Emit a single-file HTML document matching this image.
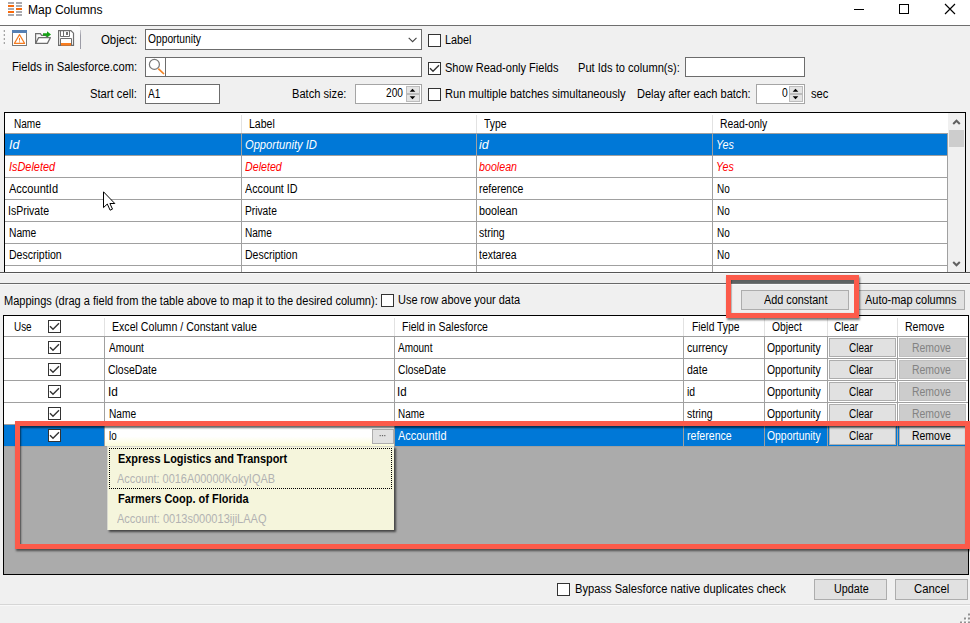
<!DOCTYPE html>
<html>
<head>
<meta charset="utf-8">
<title>Map Columns</title>
<style>
*{box-sizing:border-box;margin:0;padding:0}
html,body{width:970px;height:623px;overflow:hidden;background:#f0f0f0}
body{position:relative;font-family:"Liberation Sans",sans-serif;font-size:12px;color:#000;line-height:14px}
.a{position:absolute;white-space:nowrap}
.t{position:absolute;white-space:nowrap;height:14px;line-height:14px;transform-origin:0 0}
.inp{position:absolute;background:#fff;border:1px solid #6c6c6c}
.cb{position:absolute;width:13px;height:13px;background:#fff;border:1px solid #333}
.cb svg{position:absolute;left:0;top:0}
.btn{position:absolute;background:#e1e1e1;border:1px solid #adadad}
.btn.dis{background:#cccccc;border-color:#bfbfbf}
.hl{position:absolute;background:#a0a0a0;height:1px}
.vl{position:absolute;background:#a0a0a0;width:1px}
</style>
</head>
<body>
<!-- title bar -->
<div class="a" style="left:0;top:0;width:970px;height:25px;background:#fff"></div>
<div class="a" style="left:0;top:25px;width:970px;height:1px;background:#6e6e6e"></div>
<svg class="a" style="left:8px;top:2px" width="14" height="15" viewBox="0 0 14 15">
<g fill="#a9a9ae">
<rect x="0" y="0" width="6" height="2"/><rect x="8" y="0" width="6" height="2"/>
<rect x="8" y="3" width="6" height="2"/><rect x="0" y="6" width="6" height="2"/><rect x="8" y="9" width="6" height="2"/>
<rect x="0" y="12" width="6" height="2"/><rect x="8" y="12" width="6" height="2"/>
</g>
<g fill="#fa6a0a">
<rect x="0" y="3" width="6" height="2"/><rect x="8" y="6" width="6" height="2"/><rect x="0" y="9" width="6" height="2"/>
</g>
</svg>
<svg class="a" style="left:850px;top:0" width="120" height="25" viewBox="0 0 120 25" fill="none" stroke="#000" stroke-width="1">
<path d="M4 9.5H14"/><rect x="49.5" y="4.5" width="9" height="9"/><path d="M95 4L105 14M105 4L95 14" stroke-width="1.15"/>
</svg>

<!-- toolbar -->
<div class="a" style="left:0;top:26px;width:80px;height:24px;background:linear-gradient(#fcfcfc,#f5f5f5);border-radius:0 2px 2px 0"></div>
<div class="a" style="left:80px;top:30px;width:1px;height:19px;background:linear-gradient(#d0d0d4,#9c9ca6 30%)"></div>
<svg class="a" style="left:3px;top:29px" width="3" height="16" viewBox="0 0 3 16" fill="#a6a6a6"><rect x="0.7" y="1" width="1.3" height="2"/><rect x="0.7" y="5" width="1.3" height="2"/><rect x="0.7" y="9" width="1.3" height="2"/><rect x="0.7" y="13" width="1.3" height="2"/></svg>
<svg class="a" style="left:12px;top:30px" width="16" height="16" viewBox="0 0 16 16">
<rect x="0.5" y="0.5" width="14" height="15" fill="#fff" stroke="#7a7a7a"/>
<rect x="0" y="0" width="15" height="3" fill="#5580b4"/>
<path d="M7.5 4.6L12.6 13.4H2.4Z" fill="none" stroke="#f47b20" stroke-width="1.1" stroke-linejoin="round"/>
<rect x="7" y="8" width="1" height="2.6" fill="#f47b20"/><rect x="7" y="11.4" width="1" height="1" fill="#f47b20"/>
</svg>
<svg class="a" style="left:35px;top:30px" width="17" height="16" viewBox="0 0 17 16">
<path d="M0.6 13.4V3.6H5.4L6.6 5.4H11.4V7.5" fill="none" stroke="#6e6e6e" stroke-width="1.2"/>
<path d="M0.6 13.4L3.6 7.6H15.4L12.4 13.4Z" fill="#fff" stroke="#6e6e6e" stroke-width="1.2" stroke-linejoin="round"/>
<path d="M8 3.2H12V1.2L16 4.4L12 7.6V5.8H8Z" fill="#14a014"/>
</svg>
<svg class="a" style="left:58px;top:30px" width="17" height="16" viewBox="0 0 17 16">
<path d="M0.6 0.6H12.9L15.5 3.2V15.4H0.6Z" fill="#fff" stroke="#6e6e6e" stroke-width="1.2"/>
<path d="M2.5 0.6V6.5H11.5V0.6" fill="none" stroke="#707070" stroke-width="1"/>
<path d="M5.5 0.6V6.5" fill="none" stroke="#707070" stroke-width="1"/>
<rect x="8" y="2" width="2" height="3" fill="#707070"/>
<path d="M2.5 15.4V8.5H13.5V15.4" fill="none" stroke="#707070" stroke-width="1"/>
<rect x="3" y="13" width="10" height="2.6" fill="#fa7d1e"/>
</svg>

<div class="inp" style="left:145px;top:29px;width:277px;height:21px"></div>
<svg class="a" style="left:408px;top:37px" width="10" height="7" viewBox="0 0 10 7" fill="none" stroke="#444" stroke-width="1.1"><path d="M0.7 0.8L4.6 4.7L8.5 0.8"/></svg>
<div class="cb" style="left:428px;top:34px"></div>
<div class="inp" style="left:145px;top:57px;width:277px;height:20px"></div>
<div class="a" style="left:165px;top:58px;width:1px;height:18px;background:#6c6c6c"></div>
<svg class="a" style="left:147px;top:58px" width="18" height="18" viewBox="0 0 18 18" fill="none"><circle cx="7.4" cy="6.4" r="5" stroke="#777" stroke-width="1.2"/><path d="M11.3 10.6L17 16" stroke="#f58220" stroke-width="1.7"/></svg>
<div class="cb" style="left:428px;top:62px"><svg width="11" height="11" viewBox="0 0 11 11" fill="none" stroke="#333" stroke-width="1.4"><path d="M1 5.3L4 8.3L10 2.2"/></svg></div>
<div class="inp" style="left:685px;top:57px;width:120px;height:20px"></div>
<div class="inp" style="left:145px;top:84px;width:75px;height:20px"></div>
<div class="inp" style="left:355px;top:84px;width:67px;height:20px;border-color:#a5a5a5"></div>
<div class="a" style="left:406px;top:86px;width:14px;height:8px;background:#e4e4e4;border:1px solid #bcbcbc"></div>
<div class="a" style="left:406px;top:94px;width:14px;height:8px;background:#e4e4e4;border:1px solid #bcbcbc"></div>
<svg class="a" style="left:409px;top:88px" width="7" height="12" viewBox="0 0 7 12" fill="#000"><path d="M0.7 3.8L3.5 0.8L6.3 3.8Z"/><path d="M0.7 8.2L3.5 11.2L6.3 8.2Z"/></svg>
<div class="cb" style="left:428px;top:88px"></div>
<div class="inp" style="left:756px;top:84px;width:49px;height:20px;border-color:#a5a5a5"></div>
<div class="a" style="left:789px;top:86px;width:14px;height:8px;background:#e4e4e4;border:1px solid #bcbcbc"></div>
<div class="a" style="left:789px;top:94px;width:14px;height:8px;background:#e4e4e4;border:1px solid #bcbcbc"></div>
<svg class="a" style="left:792px;top:88px" width="7" height="12" viewBox="0 0 7 12" fill="#000"><path d="M0.7 3.8L3.5 0.8L6.3 3.8Z"/><path d="M0.7 8.2L3.5 11.2L6.3 8.2Z"/></svg>

<!-- TABLE 1 -->
<div class="a" style="left:4px;top:112px;width:962px;height:160px;background:#fff;border:1px solid #000;border-bottom:none;overflow:hidden">
<div class="vl" style="left:236px;top:2px;height:18px;background:#e2e2e2"></div>
<div class="vl" style="left:471px;top:2px;height:18px;background:#e2e2e2"></div>
<div class="vl" style="left:707px;top:2px;height:18px;background:#e2e2e2"></div>
<div class="hl" style="left:0;top:20px;width:943px"></div>
<div class="a" style="left:0;top:21px;width:943px;height:21px;background:#0078d7"></div>
<div class="hl" style="left:0;top:42px;width:943px"></div>
<div class="hl" style="left:0;top:64px;width:943px"></div>
<div class="hl" style="left:0;top:86px;width:943px"></div>
<div class="hl" style="left:0;top:108px;width:943px"></div>
<div class="hl" style="left:0;top:130px;width:943px"></div>
<div class="hl" style="left:0;top:152px;width:943px"></div>
<div class="hl" style="left:0;top:174px;width:943px"></div>
<div class="vl" style="left:236px;top:20px;height:140px"></div>
<div class="vl" style="left:471px;top:20px;height:140px"></div>
<div class="vl" style="left:707px;top:20px;height:140px"></div>
<div class="vl" style="left:942px;top:20px;height:140px"></div>
<div class="a" style="left:943px;top:0;width:17px;height:160px;background:#f0f0f0"></div>
<div class="a" style="left:944px;top:17px;width:15px;height:17px;background:#cdcdcd"></div>
<svg class="a" style="left:947px;top:6px" width="9" height="6" viewBox="0 0 9 6" fill="none" stroke="#606060" stroke-width="2"><path d="M1.2 5L4.5 1.7L7.8 5"/></svg>
<svg class="a" style="left:947px;top:148px" width="9" height="6" viewBox="0 0 9 6" fill="none" stroke="#606060" stroke-width="2"><path d="M1.2 1L4.5 4.3L7.8 1"/></svg>
</div>
<!-- splitter lines -->
<div class="a" style="left:0;top:272px;width:970px;height:1px;background:#565656"></div><div class="a" style="left:0;top:273px;width:970px;height:1px;background:#f9f9f9"></div>
<div class="a" style="left:0;top:283px;width:970px;height:1px;background:#686868"></div><div class="a" style="left:0;top:284px;width:970px;height:1px;background:#f9f9f9"></div>
<!-- mappings -->
<div class="cb" style="left:381px;top:294px"></div>
<div class="btn" style="left:741px;top:290px;width:108px;height:20px"></div>
<div class="btn" style="left:858px;top:290px;width:107px;height:20px"></div>

<!-- GRID 2 -->
<div class="a" style="left:3px;top:315px;width:966px;height:260px;background:#ababab;border:1px solid #000;overflow:hidden">
<div class="a" style="left:0;top:0;width:964px;height:20px;background:#fff"></div>
<div class="vl" style="left:100px;top:2px;height:18px;background:#e2e2e2"></div>
<div class="vl" style="left:390px;top:2px;height:18px;background:#e2e2e2"></div>
<div class="vl" style="left:679px;top:2px;height:18px;background:#e2e2e2"></div>
<div class="vl" style="left:760px;top:2px;height:18px;background:#e2e2e2"></div>
<div class="vl" style="left:823px;top:2px;height:18px;background:#e2e2e2"></div>
<div class="vl" style="left:893px;top:2px;height:18px;background:#e2e2e2"></div>
<div class="hl" style="left:0;top:20px;width:964px"></div>
<div class="cb" style="left:44px;top:4px"><svg width="11" height="11" viewBox="0 0 11 11" fill="none" stroke="#333" stroke-width="1.4"><path d="M1 5.3L4 8.3L10 2.2"/></svg></div>
<div class="a" style="left:0;top:21px;width:964px;height:21px;background:#fff"></div>
<div class="cb" style="left:44px;top:25px"><svg width="11" height="11" viewBox="0 0 11 11" fill="none" stroke="#333" stroke-width="1.4"><path d="M1 5.3L4 8.3L10 2.2"/></svg></div>
<div class="btn" style="left:825px;top:22px;width:67px;height:19px"></div>
<div class="btn dis" style="left:895px;top:22px;width:67px;height:19px"></div>
<div class="hl" style="left:0;top:42px;width:964px"></div>
<div class="a" style="left:0;top:43px;width:964px;height:21px;background:#fff"></div>
<div class="cb" style="left:44px;top:47px"><svg width="11" height="11" viewBox="0 0 11 11" fill="none" stroke="#333" stroke-width="1.4"><path d="M1 5.3L4 8.3L10 2.2"/></svg></div>
<div class="btn" style="left:825px;top:44px;width:67px;height:19px"></div>
<div class="btn dis" style="left:895px;top:44px;width:67px;height:19px"></div>
<div class="hl" style="left:0;top:64px;width:964px"></div>
<div class="a" style="left:0;top:65px;width:964px;height:21px;background:#fff"></div>
<div class="cb" style="left:44px;top:69px"><svg width="11" height="11" viewBox="0 0 11 11" fill="none" stroke="#333" stroke-width="1.4"><path d="M1 5.3L4 8.3L10 2.2"/></svg></div>
<div class="btn" style="left:825px;top:66px;width:67px;height:19px"></div>
<div class="btn dis" style="left:895px;top:66px;width:67px;height:19px"></div>
<div class="hl" style="left:0;top:86px;width:964px"></div>
<div class="a" style="left:0;top:87px;width:964px;height:21px;background:#fff"></div>
<div class="cb" style="left:44px;top:91px"><svg width="11" height="11" viewBox="0 0 11 11" fill="none" stroke="#333" stroke-width="1.4"><path d="M1 5.3L4 8.3L10 2.2"/></svg></div>
<div class="btn" style="left:825px;top:88px;width:67px;height:19px"></div>
<div class="btn dis" style="left:895px;top:88px;width:67px;height:19px"></div>
<div class="hl" style="left:0;top:108px;width:964px"></div>
<div class="a" style="left:0;top:109px;width:964px;height:21px;background:#0078d7"></div>
<div class="cb" style="left:44px;top:113px"><svg width="11" height="11" viewBox="0 0 11 11" fill="none" stroke="#333" stroke-width="1.4"><path d="M1 5.3L4 8.3L10 2.2"/></svg></div>
<div class="a" style="left:101px;top:109px;width:289px;height:21px;background:linear-gradient(#fff 55%,#fbfbd8)"></div>
<div class="btn" style="left:368px;top:113px;width:22px;height:15px"></div>
<svg class="a" style="left:375px;top:119px" width="8" height="2" viewBox="0 0 8 2" fill="#666"><rect x="0.6" y="0" width="1.2" height="1.2"/><rect x="2.9" y="0" width="1.2" height="1.2"/><rect x="5.2" y="0" width="1.2" height="1.2"/></svg>
<div class="btn" style="left:825px;top:110px;width:67px;height:19px"></div>
<div class="btn" style="left:895px;top:110px;width:67px;height:19px"></div>
<div class="hl" style="left:0;top:130px;width:964px"></div>
<div class="vl" style="left:100px;top:20px;height:111px"></div>
<div class="vl" style="left:390px;top:20px;height:111px"></div>
<div class="vl" style="left:679px;top:20px;height:111px"></div>
<div class="vl" style="left:760px;top:20px;height:111px"></div>
<div class="vl" style="left:823px;top:20px;height:111px"></div>
<div class="vl" style="left:893px;top:20px;height:111px"></div>
</div>

<!-- bottom -->
<div class="cb" style="left:557px;top:583px"></div>
<div class="btn" style="left:814px;top:579px;width:73px;height:21px"></div>
<div class="btn" style="left:895px;top:579px;width:73px;height:21px"></div>
<div class="a" style="left:0;top:604px;width:970px;height:1px;background:#d6d6d6"></div><div class="a" style="left:0;top:605px;width:970px;height:1px;background:#f8f8f8"></div>
<svg class="a" style="left:958px;top:611px" width="12" height="12" viewBox="0 0 12 12"><g fill="#fff"><rect x="11" y="3.5" width="1" height="2"/><rect x="7" y="7.5" width="2" height="2"/><rect x="11" y="7.5" width="1" height="2"/><rect x="3" y="11" width="2" height="1"/><rect x="7" y="11" width="2" height="1"/></g><g fill="#929292"><rect x="10" y="2.5" width="2" height="2"/><rect x="6" y="6.5" width="2" height="2"/><rect x="10" y="6.5" width="2" height="2"/><rect x="2" y="10.5" width="2" height="2"/><rect x="6" y="10.5" width="2" height="2"/><rect x="10" y="10.5" width="2" height="2"/></g></svg>

<!-- texts -->
<div class="t" style="left:28.10px;top:3px;transform:scaleX(1.0077)">Map Columns</div>
<div class="t" style="left:100.70px;top:33px;transform:scaleX(0.9501)">Object:</div>
<div class="t" style="left:148.20px;top:32px;transform:scaleX(0.8544)">Opportunity</div>
<div class="t" style="left:445.40px;top:33px;transform:scaleX(0.9026)">Label</div>
<div class="t" style="left:12.30px;top:60px;transform:scaleX(0.9333)">Fields in Salesforce.com:</div>
<div class="t" style="left:445.40px;top:61px;transform:scaleX(0.9198)">Show Read-only Fields</div>
<div class="t" style="left:578.00px;top:61px;transform:scaleX(0.9261)">Put Ids to column(s):</div>
<div class="t" style="left:90.00px;top:87px;transform:scaleX(0.9360)">Start cell:</div>
<div class="t" style="left:147.50px;top:87px;transform:scaleX(0.8398)">A1</div>
<div class="t" style="left:292.20px;top:87px;transform:scaleX(0.9270)">Batch size:</div>
<div class="t" style="left:385.90px;top:86px;transform:scaleX(0.8453)">200</div>
<div class="t" style="left:445.40px;top:87px;transform:scaleX(0.9268)">Run multiple batches simultaneously</div>
<div class="t" style="left:637.00px;top:87px;transform:scaleX(0.9206)">Delay after each batch:</div>
<div class="t" style="left:781.50px;top:86px;transform:scaleX(0.8571)">0</div>
<div class="t" style="left:810.70px;top:87px;transform:scaleX(0.9318)">sec</div>
<div class="t" style="left:14.20px;top:117px;transform:scaleX(0.8381)">Name</div>
<div class="t" style="left:249.30px;top:117px;transform:scaleX(0.8782)">Label</div>
<div class="t" style="left:484.30px;top:117px;transform:scaleX(0.8655)">Type</div>
<div class="t" style="left:719.90px;top:117px;transform:scaleX(0.8629)">Read-only</div>
<div class="t" style="left:8.90px;top:138px;font-style:italic;color:#fff;transform:scaleX(1.0354)">Id</div>
<div class="t" style="left:245.40px;top:138px;font-style:italic;color:#fff;transform:scaleX(0.9292)">Opportunity ID</div>
<div class="t" style="left:479.40px;top:138px;font-style:italic;color:#fff;transform:scaleX(1.0346)">id</div>
<div class="t" style="left:716.01px;top:138px;font-style:italic;color:#fff;transform:scaleX(0.8940)">Yes</div>
<div class="t" style="left:8.90px;top:160px;font-style:italic;color:#ff0000;transform:scaleX(0.9094)">IsDeleted</div>
<div class="t" style="left:245.40px;top:160px;font-style:italic;color:#ff0000;transform:scaleX(0.8900)">Deleted</div>
<div class="t" style="left:479.40px;top:160px;font-style:italic;color:#ff0000;transform:scaleX(0.8900)">boolean</div>
<div class="t" style="left:716.01px;top:160px;font-style:italic;color:#ff0000;transform:scaleX(0.8940)">Yes</div>
<div class="t" style="left:8.90px;top:182px;transform:scaleX(0.9185)">AccountId</div>
<div class="t" style="left:245.40px;top:182px;transform:scaleX(0.8962)">Account ID</div>
<div class="t" style="left:479.40px;top:182px;transform:scaleX(0.8722)">reference</div>
<div class="t" style="left:716.50px;top:182px;transform:scaleX(0.8298)">No</div>
<div class="t" style="left:8.02px;top:204px;transform:scaleX(0.8781)">IsPrivate</div>
<div class="t" style="left:245.40px;top:204px;transform:scaleX(0.8521)">Private</div>
<div class="t" style="left:479.40px;top:204px;transform:scaleX(0.9016)">boolean</div>
<div class="t" style="left:716.50px;top:204px;transform:scaleX(0.8298)">No</div>
<div class="t" style="left:8.90px;top:226px;transform:scaleX(0.8535)">Name</div>
<div class="t" style="left:245.40px;top:226px;transform:scaleX(0.8381)">Name</div>
<div class="t" style="left:479.40px;top:226px;transform:scaleX(0.8755)">string</div>
<div class="t" style="left:716.50px;top:226px;transform:scaleX(0.8298)">No</div>
<div class="t" style="left:8.90px;top:248px;transform:scaleX(0.8778)">Description</div>
<div class="t" style="left:245.40px;top:248px;transform:scaleX(0.8745)">Description</div>
<div class="t" style="left:479.40px;top:248px;transform:scaleX(0.8676)">textarea</div>
<div class="t" style="left:716.50px;top:248px;transform:scaleX(0.8298)">No</div>
<div class="t" style="left:3.60px;top:294px;transform:scaleX(0.9200)">Mappings (drag a field from the table above to map it to the desired column):</div>
<div class="t" style="left:398.30px;top:293px;transform:scaleX(0.9153)">Use row above your data</div>
<div class="t" style="left:13.60px;top:320px;transform:scaleX(0.8262)">Use</div>
<div class="t" style="left:111.90px;top:320px;transform:scaleX(0.8826)">Excel Column / Constant value</div>
<div class="t" style="left:402.10px;top:320px;transform:scaleX(0.8704)">Field in Salesforce</div>
<div class="t" style="left:691.50px;top:320px;transform:scaleX(0.8620)">Field Type</div>
<div class="t" style="left:771.60px;top:320px;transform:scaleX(0.8600)">Object</div>
<div class="t" style="left:834.40px;top:320px;transform:scaleX(0.8403)">Clear</div>
<div class="t" style="left:904.90px;top:320px;transform:scaleX(0.8798)">Remove</div>
<div class="t" style="left:108.50px;top:341px;transform:scaleX(0.8448)">Amount</div>
<div class="t" style="left:397.80px;top:341px;transform:scaleX(0.8329)">Amount</div>
<div class="t" style="left:686.50px;top:341px;transform:scaleX(0.8802)">currency</div>
<div class="t" style="left:767.30px;top:341px;transform:scaleX(0.8657)">Opportunity</div>
<div class="t" style="left:108.20px;top:363px;transform:scaleX(0.8713)">CloseDate</div>
<div class="t" style="left:397.60px;top:363px;transform:scaleX(0.8553)">CloseDate</div>
<div class="t" style="left:686.50px;top:363px;transform:scaleX(0.8783)">date</div>
<div class="t" style="left:767.30px;top:363px;transform:scaleX(0.8657)">Opportunity</div>
<div class="t" style="left:108.12px;top:385px;transform:scaleX(0.9839)">Id</div>
<div class="t" style="left:397.34px;top:385px;transform:scaleX(0.9599)">Id</div>
<div class="t" style="left:686.50px;top:385px;transform:scaleX(0.8654)">id</div>
<div class="t" style="left:767.30px;top:385px;transform:scaleX(0.8657)">Opportunity</div>
<div class="t" style="left:109.10px;top:407px;transform:scaleX(0.8474)">Name</div>
<div class="t" style="left:398.30px;top:407px;transform:scaleX(0.8257)">Name</div>
<div class="t" style="left:686.50px;top:407px;transform:scaleX(0.8720)">string</div>
<div class="t" style="left:767.30px;top:407px;transform:scaleX(0.8657)">Opportunity</div>
<div class="t" style="left:108.60px;top:429px;transform:scaleX(0.8173)">lo</div>
<div class="t" style="left:397.80px;top:429px;color:#fff;transform:scaleX(0.9109)">AccountId</div>
<div class="t" style="left:686.50px;top:429px;color:#fff;transform:scaleX(0.8820)">reference</div>
<div class="t" style="left:767.30px;top:429px;color:#fff;transform:scaleX(0.8657)">Opportunity</div>
<div class="t" style="left:575.00px;top:582px;transform:scaleX(0.9294)">Bypass Salesforce native duplicates check</div>
<div class="t" style="left:849.40px;top:341px;transform:scaleX(0.8333)">Clear</div>
<div class="t" style="left:912.10px;top:341px;color:#838383;transform:scaleX(0.8709)">Remove</div>
<div class="t" style="left:849.40px;top:363px;transform:scaleX(0.8333)">Clear</div>
<div class="t" style="left:912.10px;top:363px;color:#838383;transform:scaleX(0.8709)">Remove</div>
<div class="t" style="left:849.40px;top:385px;transform:scaleX(0.8333)">Clear</div>
<div class="t" style="left:912.10px;top:385px;color:#838383;transform:scaleX(0.8709)">Remove</div>
<div class="t" style="left:849.40px;top:407px;transform:scaleX(0.8333)">Clear</div>
<div class="t" style="left:912.10px;top:407px;color:#838383;transform:scaleX(0.8709)">Remove</div>
<div class="t" style="left:849.40px;top:429px;transform:scaleX(0.8333)">Clear</div>
<div class="t" style="left:912.10px;top:429px;transform:scaleX(0.8709)">Remove</div>
<div class="t" style="left:763.90px;top:293px;transform:scaleX(0.9050)">Add constant</div>
<div class="t" style="left:864.90px;top:293px;transform:scaleX(0.9136)">Auto-map columns</div>
<div class="t" style="left:833.90px;top:582px;transform:scaleX(0.8969)">Update</div>
<div class="t" style="left:913.90px;top:582px;transform:scaleX(0.9431)">Cancel</div>

<!-- dropdown popup -->
<div class="a" style="left:107px;top:446px;width:287px;height:84px;background:#f5f5dc;border:1px solid #d9d9d0;border-right:none;border-bottom:none;box-shadow:2px 2px 2px rgba(0,0,0,0.6)"></div>
<div class="a" style="left:109px;top:448px;width:283px;height:41px;border:1px dotted #000"></div>
<div class="t" style="left:117.70px;top:452px;font-weight:bold;transform:scaleX(0.9094)">Express Logistics and Transport</div>
<div class="t" style="left:117.30px;top:472px;color:#b2b2b2;transform:scaleX(0.9109)">Account: 0016A00000KokyIQAB</div>
<div class="t" style="left:117.70px;top:492px;font-weight:bold;transform:scaleX(0.9153)">Farmers Coop. of Florida</div>
<div class="t" style="left:117.30px;top:512px;color:#b2b2b2;transform:scaleX(0.9185)">Account: 0013s000013ijiLAAQ</div>

<!-- red highlight rects -->
<div class="a" style="left:731px;top:280px;width:123px;height:4px;background:linear-gradient(#5d6262 70%,#7d8080)"></div>
<div class="a" style="left:726px;top:275px;width:133px;height:43px;border:5px solid #fc5a4a;box-shadow:1px 2px 2px rgba(0,0,0,0.55), inset 1px 0 1px rgba(0,0,0,0.25)"></div>
<div class="a" style="left:15px;top:421px;width:955px;height:128px;border:5px solid #fc5a4a;box-shadow:1px 2px 2px rgba(0,0,0,0.55), inset 1px 2px 2px rgba(0,0,0,0.6)"></div>

<!-- mouse cursor -->
<svg class="a" style="left:103px;top:191px" width="13" height="21" viewBox="0 0 13 21"><path d="M0.5 0.8V16.6L4.3 13L7.1 19.2L9.5 18.1L6.9 12.5H11.8Z" fill="#fff" stroke="#000" stroke-width="1" stroke-linejoin="miter"/></svg>
</body>
</html>
